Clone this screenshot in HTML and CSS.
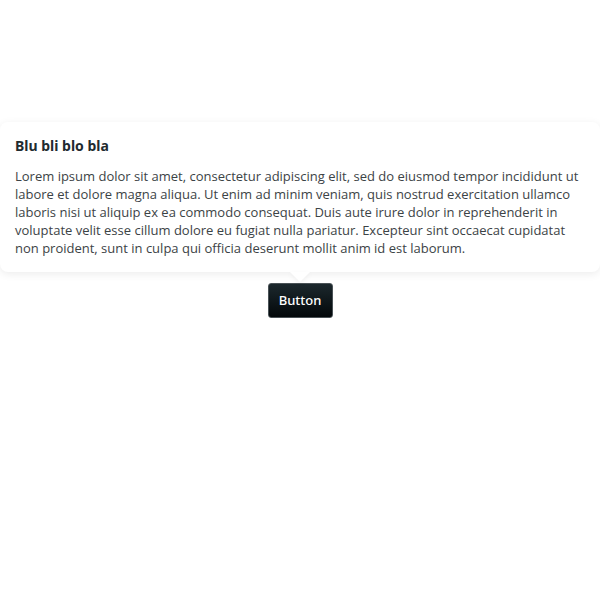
FILE: index.html
```html
<!DOCTYPE html>
<html>
<head>
<meta charset="utf-8">
<link rel="stylesheet" href="styles.css">
</head>
<body>
<div class="stage">
  <div class="anchor">
    <div class="tooltip">
      <h3 class="tooltip-title">Blu bli blo bla</h3>
      <p class="tooltip-text">Lorem ipsum dolor sit amet, consectetur adipiscing elit, sed do eiusmod tempor incididunt ut labore et dolore magna aliqua. Ut enim ad minim veniam, quis nostrud exercitation ullamco laboris nisi ut aliquip ex ea commodo consequat. Duis aute irure dolor in reprehenderit in voluptate velit esse cillum dolore eu fugiat nulla pariatur. Excepteur sint occaecat cupidatat non proident, sunt in culpa qui officia deserunt mollit anim id est laborum.</p>
    </div>
    <button class="btn">Button</button>
  </div>
</div>
</body>
</html>
```
FILE: styles.css
```css
html, body {
  margin: 0;
  padding: 0;
  background: #fff;
}
.stage {
  width: 600px;
  height: 600px;
  display: flex;
  align-items: center;
  justify-content: center;
}
.anchor {
  position: relative;
}
.btn {
  display: block;
  width: 65px;
  height: 35px;
  padding: 0;
  border: 1px solid #4a5256;
  border-radius: 3px;
  background: linear-gradient(#1c282d, #03080a);
  color: #fff;
  font-family: "Noto Sans", sans-serif;
  font-weight: 500;
  font-size: 13px;
  cursor: pointer;
}
.tooltip {
  position: absolute;
  left: 50%;
  bottom: calc(100% + 11px);
  transform: translateX(-50%);
  width: 600px;
  box-sizing: border-box;
  padding: 14px 15px 15px 15px;
  background: #fff;
  border-radius: 8px;
  box-shadow: 0 2px 8px rgba(0, 0, 0, 0.08);
}
.tooltip::after {
  content: "";
  position: absolute;
  left: 50%;
  top: 100%;
  margin-left: -10px;
  width: 0;
  height: 0;
  border-left: 10px solid transparent;
  border-right: 10px solid transparent;
  border-top: 10px solid #fff;
  filter: drop-shadow(0 2px 2px rgba(0, 0, 0, 0.05));
}
.tooltip-title {
  margin: 0 0 11px 0;
  font-family: "Noto Sans", sans-serif;
  font-weight: 700;
  font-size: 14px;
  line-height: 20px;
  color: #1f2b30;
}
.tooltip-text {
  margin: 0;
  font-family: "Open Sans", sans-serif;
  font-size: 13px;
  line-height: 18px;
  color: #3c4346;
}
```
